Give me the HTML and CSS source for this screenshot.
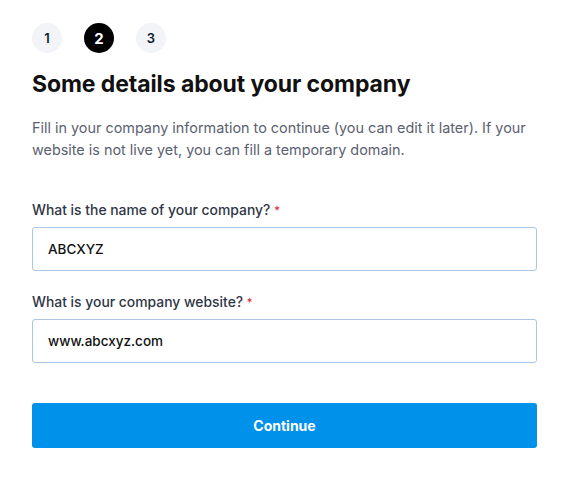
FILE: index.html
```html
<!DOCTYPE html>
<html>
<head>
<meta charset="utf-8">
<link rel="stylesheet" href="styles.css">
</head>
<body>
<div class="page">
  <div class="steps">
    <span class="step">1</span>
    <span class="step active">2</span>
    <span class="step">3</span>
  </div>
  <h1 class="title">Some details about your company</h1>
  <p class="intro">Fill in your company information to continue (you can edit it later). If your website is not live yet, you can fill a temporary domain.</p>
  <div class="field">
    <label class="label">What is the name of your company? <span class="req">*</span></label>
    <div class="input">ABCXYZ</div>
  </div>
  <div class="field">
    <label class="label">What is your company website? <span class="req">*</span></label>
    <div class="input">www.abcxyz.com</div>
  </div>
  <button class="btn">Continue</button>
</div>
</body>
</html>
```
FILE: styles.css
```css
* { box-sizing: border-box; }
html, body { margin: 0; padding: 0; background: #fff; }
body { font-family: Inter, "Open Sans", sans-serif; color: #111; }
.page { padding: 23px 43px 0 32px; width: 580px; }
.steps { display: flex; gap: 22px; }
.step {
  width: 30px; height: 30px; border-radius: 50%;
  background: #f3f4f7; color: #0d1b35; font-weight: 600; font-size: 13px;
  display: flex; align-items: center; justify-content: center;
}
.step.active { background: #000; color: #fff; font-size: 15px; font-weight: 700; }
.title { margin: 16px 0 0; font-size: 23px; font-weight: 700; line-height: 30px; color: #111; letter-spacing: -0.1px; }
.intro { margin: 18px 0 0; font-size: 14.4px; line-height: 22px; color: #5b6170; }
.field { margin-top: 39px; }
.field + .field { margin-top: 21px; }
.label { display: block; font-size: 13.9px; line-height: 20px; color: #303645; font-weight: 500; margin-bottom: 7px; }
.req { color: #e0203a; font-size: 11px; vertical-align: top; }
.input {
  height: 44px; border: 1px solid #a9c7e4; border-radius: 3px;
  padding: 0 15px; display: flex; align-items: center;
  font-size: 13.5px; color: #111; font-weight: 500;
}
.btn {
  margin-top: 40px; width: 100%; height: 45px; border: 0; border-radius: 3px;
  background: #0091ea; color: #fff; font-family: inherit; font-size: 14px; font-weight: 700;
}
```
